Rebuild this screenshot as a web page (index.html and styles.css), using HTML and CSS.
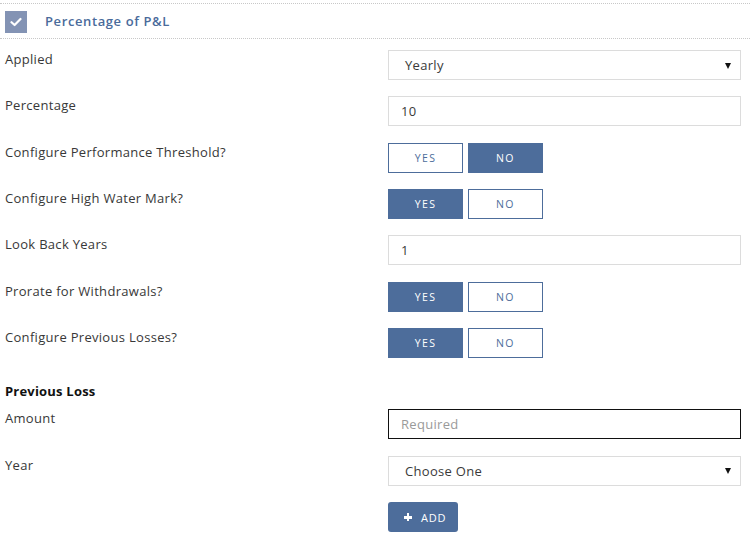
FILE: index.html
```html
<!DOCTYPE html>
<html>
<head>
<meta charset="utf-8">
<link rel="stylesheet" href="styles.css">
</head>
<body>
<div class="panel">
  <div class="header">
    <span class="check">
      <svg width="12" height="10" viewBox="0 0 12 10"><path d="M1.5 5.2 L4.6 8 L10.5 2" fill="none" stroke="#fff" stroke-width="2.2" stroke-linecap="round" stroke-linejoin="round"/></svg>
    </span>
    <span class="title">Percentage of P&amp;L</span>
  </div>

  <div class="form">
    <div class="row">
      <label class="lbl">Applied</label>
      <div class="select"><span>Yearly</span><span class="arrow"></span></div>
    </div>
    <div class="row">
      <label class="lbl">Percentage</label>
      <div class="input">10</div>
    </div>
    <div class="row">
      <label class="lbl">Configure Performance Threshold?</label>
      <div class="toggle"><span class="btn">YES</span><span class="btn on">NO</span></div>
    </div>
    <div class="row">
      <label class="lbl">Configure High Water Mark?</label>
      <div class="toggle"><span class="btn on">YES</span><span class="btn">NO</span></div>
    </div>
    <div class="row">
      <label class="lbl">Look Back Years</label>
      <div class="input">1</div>
    </div>
    <div class="row">
      <label class="lbl">Prorate for Withdrawals?</label>
      <div class="toggle"><span class="btn on">YES</span><span class="btn">NO</span></div>
    </div>
    <div class="row">
      <label class="lbl">Configure Previous Losses?</label>
      <div class="toggle"><span class="btn on">YES</span><span class="btn">NO</span></div>
    </div>
  </div>

  <h3 class="section">Previous Loss</h3>

  <div class="form loss">
    <div class="row">
      <label class="lbl">Amount</label>
      <div class="input focus placeholder">Required</div>
    </div>
    <div class="row">
      <label class="lbl">Year</label>
      <div class="select"><span>Choose One</span><span class="arrow"></span></div>
    </div>
    <div class="row">
      <span></span>
      <div><span class="add"><span class="plus"></span>ADD</span></div>
    </div>
  </div>
</div>
</body>
</html>
```
FILE: styles.css
```css
html, body {
  margin: 0;
  padding: 0;
  background: #fff;
}
body {
  font-family: "Open Sans", "Liberation Sans", sans-serif;
  font-size: 13px;
  letter-spacing: 0.3px;
  color: #333;
  width: 750px;
  height: 534px;
  overflow: hidden;
}
.panel {
  padding-top: 3px;
}
.header {
  border-top: 1px dotted #c8c8c8;
  border-bottom: 1px dotted #c8c8c8;
  height: 34px;
  display: flex;
  align-items: center;
  padding-left: 5px;
}
.check {
  width: 22px;
  height: 22px;
  background: #8393b4;
  display: flex;
  align-items: center;
  justify-content: center;
  margin-top: 1px;
}
.title {
  margin-left: 18px;
  font-weight: 600;
  color: #4a6b9b;
  font-size: 13px;
  letter-spacing: 0.6px;
}
.form {
  display: flex;
  flex-direction: column;
  gap: 16.33px;
  padding-top: 11px;
}
.row {
  display: grid;
  grid-template-columns: 388px 353px;
  height: 30px;
}
.lbl {
  padding-left: 5px;
  line-height: 18px;
  margin-top: 0;
  color: #383838;
}
.select, .input {
  box-sizing: border-box;
  height: 30px;
  border: 1px solid #dcdcdc;
  display: flex;
  align-items: center;
  justify-content: space-between;
  color: #3a3a3a;
}
.select {
  padding: 0 9px 0 16px;
}
.input {
  padding: 0 12px;
}
.input.focus {
  border-color: #111;
}
.placeholder {
  color: #9a9a9a;
}
.arrow {
  width: 0;
  height: 0;
  border-left: 3.5px solid transparent;
  border-right: 3.5px solid transparent;
  border-top: 6px solid #111;
  margin-top: 1px;
}
.toggle {
  display: flex;
  gap: 5px;
}
.btn {
  box-sizing: border-box;
  width: 75px;
  height: 30px;
  border: 1px solid #4d6d9b;
  color: #4d6d9b;
  background: #fff;
  font-size: 10.5px;
  letter-spacing: 1.4px;
  display: flex;
  align-items: center;
  justify-content: center;
}
.btn.on {
  background: #4d6d9b;
  color: #fff;
}
.section {
  margin: 0;
  padding: 24px 0 0 5px;
  font-size: 13px;
  font-weight: 700;
  color: #111;
  line-height: 18px;
  height: 18px;
  letter-spacing: 0.2px;
}
.form.loss {
  padding-top: 9px;
  gap: 16.6px;
}
.add {
  box-sizing: border-box;
  width: 70px;
  height: 30px;
  background: #4d6d9b;
  border-radius: 3px;
  color: #fff;
  font-size: 11px;
  letter-spacing: 0.8px;
  display: inline-flex;
  align-items: center;
  padding-left: 16px;
}
.plus {
  position: relative;
  width: 8px;
  height: 8px;
  margin-right: 9px;
}
.plus::before, .plus::after {
  content: "";
  position: absolute;
  background: #fff;
}
.plus::before {
  left: 0;
  top: 3px;
  width: 8px;
  height: 2.5px;
}
.plus::after {
  left: 2.75px;
  top: 0;
  width: 2.5px;
  height: 8px;
}
```
